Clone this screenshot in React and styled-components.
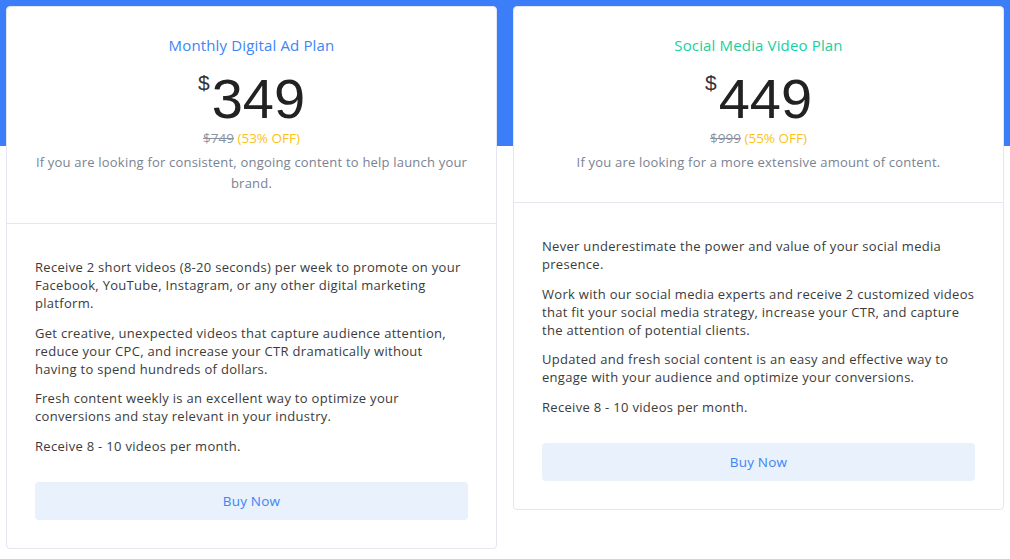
import React from "react";
import styled, { createGlobalStyle } from "styled-components";

const GlobalStyle = createGlobalStyle`
  html, body { margin: 0; padding: 0; background: #fff; }
  body { font-family: "Open Sans", "Liberation Sans", sans-serif; }
  * { box-sizing: border-box; }
`;

const Page = styled.div`
  width: 1010px;
  min-height: 559px;
  background: linear-gradient(#3b7ef8 0 146px, #ffffff 146px);
  padding: 6px 6px;
  display: grid;
  grid-template-columns: 1fr 1fr;
  gap: 16px;
  align-items: start;
`;

const Card = styled.div`
  background: #fff;
  border: 1px solid #e4e6f1;
  border-radius: 4px;
  display: flex;
  flex-direction: column;
`;

const Header = styled.div`
  padding: 27px 28px 29px;
  border-bottom: 1px solid #e4e6f1;
  text-align: center;
`;

const Title = styled.div`
  font-size: 15px;
  line-height: 22px;
  letter-spacing: 0.15px;
  color: ${(p) => p.$color};
`;

const PriceRow = styled.div`
  margin-top: 15px;
  display: flex;
  justify-content: center;
  align-items: flex-start;
  font-family: "Liberation Sans", Arial, sans-serif;
  color: #222;
`;

const Currency = styled.span`
  font-size: 21px;
  line-height: 21px;
  margin-top: 1px;
  margin-right: 2px;
  color: #333;
`;

const Amount = styled.span`
  font-size: 56px;
  line-height: 56px;
`;

const OldPrice = styled.div`
  font-size: 13.5px;
  line-height: 20px;
  margin-top: 1px;
`;

const Strike = styled.span`
  color: #8b93a0;
  text-decoration: line-through;
`;

const Off = styled.span`
  color: #fcc21b;
`;

const Description = styled.p`
  margin: 4px 0 0;
  font-size: 13px;
  line-height: 21px;
  letter-spacing: 0.2px;
  color: #7a8292;
`;

const Body = styled.div`
  padding: 34px 28px 28px;
`;

const Paragraph = styled.p`
  margin: 0 0 11.5px;
  font-size: 13px;
  line-height: 18px;
  letter-spacing: 0.3px;
  color: #3b3b3b;
  &:last-of-type { margin-bottom: 0; }
`;

const BuyButton = styled.button`
  margin-top: 27px;
  width: 100%;
  height: 38px;
  border: none;
  border-radius: 4px;
  background: #e9f1fd;
  color: #3d84f6;
  font-family: inherit;
  font-size: 13.5px;
  letter-spacing: 0.2px;
  cursor: pointer;
`;

const plans = [
  {
    title: "Monthly Digital Ad Plan",
    color: "#3d86f5",
    price: "349",
    old: "$749",
    off: "(53% OFF)",
    description:
      "If you are looking for consistent, ongoing content to help launch your brand.",
    paragraphs: [
      "Receive 2 short videos (8-20 seconds) per week to promote on your Facebook, YouTube, Instagram, or any other digital marketing platform.",
      "Get creative, unexpected videos that capture audience attention, reduce your CPC, and increase your CTR dramatically without having\u00a0to spend hundreds of dollars.",
      "Fresh content weekly is an excellent way to optimize your conversions and stay relevant in your industry.",
      "Receive 8 - 10 videos per month.",
    ],
  },
  {
    title: "Social Media Video Plan",
    color: "#17cf9f",
    price: "449",
    old: "$999",
    off: "(55% OFF)",
    description: "If you are looking for a more extensive amount of content.",
    paragraphs: [
      "Never underestimate the power and value of your social media presence.",
      "Work with our social media experts and receive 2 customized videos that fit your social media strategy, increase your CTR, and capture the attention of potential clients.",
      "Updated and fresh social content is an easy and effective way to engage with your audience and optimize your conversions.",
      "Receive 8 - 10 videos per month.",
    ],
  },
];

export default function App() {
  return (
    <>
      <GlobalStyle />
      <Page>
        {plans.map((p) => (
          <Card key={p.title}>
            <Header>
              <Title $color={p.color}>{p.title}</Title>
              <PriceRow>
                <Currency>$</Currency>
                <Amount>{p.price}</Amount>
              </PriceRow>
              <OldPrice>
                <Strike>{p.old}</Strike> <Off>{p.off}</Off>
              </OldPrice>
              <Description>{p.description}</Description>
            </Header>
            <Body>
              {p.paragraphs.map((t, i) => (
                <Paragraph key={i}>{t}</Paragraph>
              ))}
              <BuyButton>Buy Now</BuyButton>
            </Body>
          </Card>
        ))}
      </Page>
    </>
  );
}
